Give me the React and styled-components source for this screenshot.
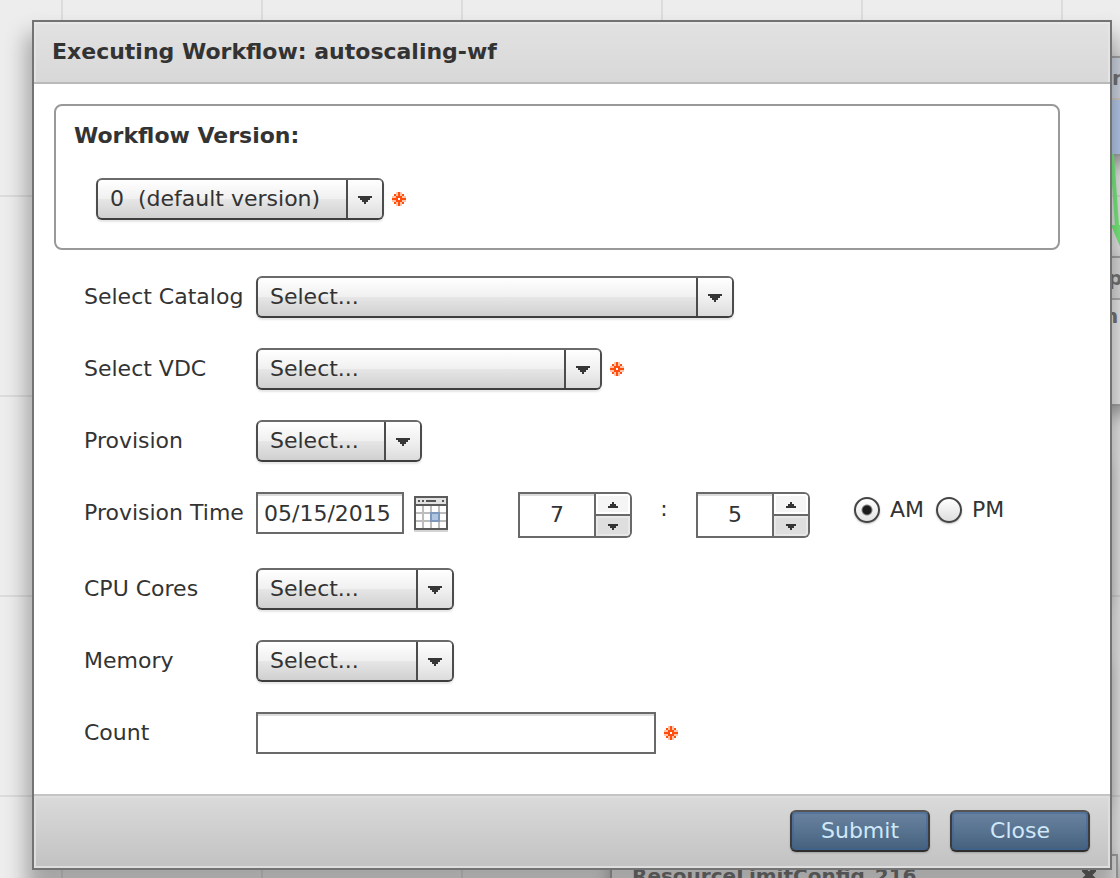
import { useState } from 'react';
import styled, { createGlobalStyle, css } from 'styled-components';

const GlobalStyle = createGlobalStyle`
  *, *::before, *::after {
    box-sizing: border-box;
  }

  body {
    margin: 0;
    background: #ededed;
    color: #333;
    font-family: 'DejaVu Sans', Verdana, sans-serif;
    font-size: 22px;
    line-height: 28px;
  }

  button, input, select {
    font: inherit;
    color: inherit;
  }
`;

const Page = styled.div`
  position: relative;
  min-height: 100vh;
  max-height: 100vh;
  padding: 20px 8px 8px 32px;
  overflow: hidden;
`;

// Workflow canvas behind the dialog
const Canvas = styled.div`
  position: absolute;
  inset: 0;
  overflow: hidden;
  background-color: #ededed;
  background-image:
    linear-gradient(90deg, #dcdcdc 2px, transparent 2px),
    linear-gradient(#dcdcdc 2px, transparent 2px);
  background-size: 200px 200px;
  background-position: 61px 195px;
`;

const Node = styled.div`
  position: absolute;
  left: ${p => p.$x}px;
  top: ${p => p.$y}px;
  width: ${p => p.$w}px;
  height: ${p => p.$h}px;
  border: 2px solid #a8a8a8;
  background: ${p => p.$fill};
  box-shadow: 0 8px 16px rgba(0, 0, 0, 0.3);
  color: #777;
  font-size: 20px;
  font-weight: bold;
  line-height: 24px;
`;

const NodeTitle = styled.div`
  display: flex;
  justify-content: space-between;
  height: 42px;
  padding: 8px 20px;
  border-bottom: 2px solid ${p => p.$line || '#b4b4b4'};
  background: ${p => p.$fill || 'transparent'};
  white-space: nowrap;
`;

const NodeText = styled.div`
  padding: 4px 16px;
`;

const Arrow = styled.svg`
  position: absolute;
  left: 1108px;
  top: 154px;
`;

const Dialog = styled.section`
  position: relative;
  border: 2px solid #737373;
  background: #fff;
  box-shadow: 0 20px 20px 6px rgba(0, 0, 0, 0.3);
`;

const DialogHeader = styled.header`
  padding: 16px 18px;
  border-bottom: 2px solid #bababa;
  background: linear-gradient(#e2e2e2, #d8d8d8);
  box-shadow: inset 0 2px 0 #e8e8e8, inset 2px 0 0 #e4e4e4, inset -2px 0 0 #e4e4e4;
`;

const Title = styled.h1`
  margin: 0;
  font-size: 22px;
  line-height: 28px;
`;

const Body = styled.div`
  padding: 20px 50px 40px 20px;
`;

const VersionBox = styled.fieldset`
  height: 146px;
  margin: 0 0 26px;
  padding: 16px 18px;
  border: 2px solid #999;
  border-radius: 8px;
`;

const VersionTitle = styled.label`
  display: block;
  margin-bottom: 28px;
  font-weight: bold;
`;

const VersionRow = styled.div`
  display: flex;
  align-items: center;
  padding-left: 22px;
`;

const Rows = styled.div`
  display: grid;
  gap: 30px;
  padding-left: 30px;
`;

const Row = styled.div`
  display: grid;
  grid-template-columns: 172px 1fr;
`;

const RowLabel = styled.label`
  line-height: 42px;
  white-space: nowrap;
`;

const Field = styled.div`
  display: flex;
  align-items: ${p => (p.$top ? 'flex-start' : 'center')};
`;

const SelectShell = styled.div`
  position: relative;
  width: ${p => p.$width}px;
  height: 42px;
  border: 2px solid;
  border-color: #6a6a6a #4c4c4c #3e3e3e;
  border-radius: 6px;
  background: linear-gradient(#fff, #f0f0f0 50%, #e6e6e6 51%, #d0d0d0);
  box-shadow: 0 2px 2px rgba(0, 0, 0, 0.1);
`;

const NativeSelect = styled.select`
  appearance: none;
  width: 100%;
  height: 38px;
  padding: 0 36px 0 12px;
  border: 0;
  background: transparent;
  white-space: pre;
`;

const SelectArrow = styled.span`
  position: absolute;
  top: 0;
  right: 0;
  display: grid;
  place-items: center;
  width: 36px;
  height: 38px;
  padding-top: 2px;
  border-left: 2px solid #4c4c4c;
  border-radius: 0 4px 4px 0;
  background: linear-gradient(#fff, #ededed 60%, #dcdcdc);
  pointer-events: none;
`;

const RequiredMark = styled.svg`
  flex-shrink: 0;
  margin-left: 8px;
`;

const inputBox = css`
  border: 2px solid #696969;
  border-radius: 0;
  background: #fff;
  box-shadow: inset 0 2px 0 #dcdcdc;
  outline: none;
`;

const TextInput = styled.input`
  ${inputBox}
  width: ${p => p.$width}px;
  height: 42px;
  padding: 0 6px;
`;

const CalendarButton = styled.button`
  display: flex;
  margin: 4px 70px 0 10px;
  padding: 0;
  border: 0;
  background: none;
`;

const Stepper = styled.div`
  display: flex;
  width: 114px;
  height: 46px;
`;

const StepperInput = styled.input`
  ${inputBox}
  width: 78px;
  padding: 0;
  text-align: center;
`;

const StepperButtons = styled.div`
  display: grid;
  grid-template-rows: 1fr 1fr;
  gap: 2px;
  width: 36px;
  border: 2px solid #696969;
  border-left: 0;
  border-radius: 0 6px 6px 0;
  background: #696969;
  overflow: hidden;
`;

const StepButton = styled.button`
  display: grid;
  place-items: center;
  padding: 2px 0 0;
  border: 0;
  background: ${p => (p.$down ? '#dedede' : '#f5f5f5')};
  box-shadow: inset 0 0 0 2px ${p => (p.$down ? '#e8e8e8' : '#fff')};
`;

const Colon = styled.span`
  width: 64px;
  line-height: 34px;
  text-align: center;
`;

const Meridiem = styled.div`
  display: flex;
  gap: 12px;
  margin-left: 44px;
`;

const RadioLabel = styled.label`
  display: flex;
  align-items: center;
  gap: 10px;
  height: 36px;
`;

const Radio = styled.input`
  appearance: none;
  width: 26px;
  height: 26px;
  margin: 0;
  border: 2px solid #444;
  border-radius: 50%;
  background: linear-gradient(#fff, #dedede);
  box-shadow: 0 1px 2px rgba(0, 0, 0, 0.25);

  &:checked {
    background: radial-gradient(circle, #1c1c1c 4px, transparent 6px), linear-gradient(#fff, #e4e4e4);
  }
`;

const DialogFooter = styled.footer`
  display: flex;
  justify-content: flex-end;
  gap: 20px;
  padding: 14px 20px 16px;
  border-top: 2px solid #c4c4c4;
  background: linear-gradient(#dadada, #c2c2c2);
  box-shadow: inset 0 0 0 2px #dedede;
`;

const ActionButton = styled.button`
  width: 140px;
  height: 42px;
  padding: 0;
  border: 2px solid;
  border-color: #555 #3c3c3c #2e2e2e;
  border-radius: 6px;
  background: linear-gradient(#6982a1, #58738f 50%, #45607c);
  box-shadow: inset 0 0 0 2px rgba(60, 100, 150, 0.45), 0 1px 2px rgba(0, 0, 0, 0.2);
  color: #cfe8fa;
`;

function Required() {
  return (
    <RequiredMark width="14" height="14" viewBox="0 0 14 14" shapeRendering="crispEdges" aria-hidden="true">
      <path d="M4 0h6v14H4zM0 4h14v6H0z" fill="#ffc4ac" />
      <path d="M6 0h2v14H6zM0 6h14v2H0z" fill="#ff4e0c" />
      <path d="M2 2h2v2H2zM10 2h2v2h-2zM2 10h2v2H2zM10 10h2v2h-2z" fill="#ff4e0c" />
      <path d="M4 4h6v6H4z" fill="#ff4e0c" />
      <path d="M6 6h2v2H6z" fill="#fff" />
    </RequiredMark>
  );
}

function Dropdown({ id, width, text }) {
  return (
    <SelectShell $width={width}>
      <NativeSelect id={id}>
        <option>{text}</option>
      </NativeSelect>
      <SelectArrow>
        <svg width="14" height="8" viewBox="0 0 14 8" shapeRendering="crispEdges">
          <path d="M0 0h14v2h-2v2h-2v2H8v2H6V6H4V4H2V2H0z" fill="#363636" />
        </svg>
      </SelectArrow>
    </SelectShell>
  );
}

function NumberStepper({ label, initial, max }) {
  const [value, setValue] = useState(initial);
  return (
    <Stepper>
      <StepperInput aria-label={label} value={value} onChange={e => setValue(Number(e.target.value) || 0)} />
      <StepperButtons>
        <StepButton aria-label={`Increase ${label}`} onClick={() => setValue(Math.min(max, value + 1))}>
          <svg width="10" height="6" viewBox="0 0 10 6" shapeRendering="crispEdges">
            <path d="M4 0h2v2h2v2h2v2H0V4h2V2h2z" fill="#333" />
          </svg>
        </StepButton>
        <StepButton $down aria-label={`Decrease ${label}`} onClick={() => setValue(Math.max(0, value - 1))}>
          <svg width="10" height="6" viewBox="0 0 10 6" shapeRendering="crispEdges">
            <path d="M0 0h10v2H8v2H6v2H4V4H2V2H0z" fill="#333" />
          </svg>
        </StepButton>
      </StepperButtons>
    </Stepper>
  );
}

function CalendarIcon() {
  return (
    <svg width="34" height="36" viewBox="0 0 34 36" shapeRendering="crispEdges">
      <path d="M0 34h34v2H0z" fill="#d4d4d4" />
      <path d="M0 0h34v34H0z" fill="#5b5b5b" />
      <path d="M2 2h30v6H2z" fill="#e2e2e2" />
      <path d="M2 10h30v22H2z" fill="#fff" />
      <path d="M4 4h2v2H4zM8 4h2v2H8zM12 4h10v2H12zM28 4h2v2h-2z" fill="#555" />
      <path d="M8 10h2v22H8zM16 10h2v22h-2zM24 10h2v22h-2zM2 16h30v2H2zM2 24h30v2H2z" fill="#bdbdbd" />
      <path d="M16 16h10v10H16z" fill="#7f99bd" />
      <path d="M18 18h6v6h-6z" fill="#b0c6e2" />
    </svg>
  );
}

export default function App() {
  const [meridiem, setMeridiem] = useState('AM');

  return (
    <Page>
      <GlobalStyle />
      <Canvas aria-hidden="true">
        <Node $x={1090} $y={56} $w={200} $h={100} $fill="#bcd0f2">
          <NodeTitle $fill="#d4dcea" $line="#d8d0c8">rt</NodeTitle>
        </Node>
        <Node $x={1086} $y={256} $w={200} $h={150} $fill="#f0f0f0">
          <NodeTitle $fill="#e2e2e2">p</NodeTitle>
          <NodeText>n</NodeText>
        </Node>
        <Node $x={800} $y={456} $w={306} $h={140} $fill="#ececec" />
        <Node $x={800} $y={656} $w={306} $h={140} $fill="#ececec" />
        <Node $x={610} $y={854} $w={508} $h={100} $fill="#ececec">
          <NodeTitle>
            <span>ResourceLimitConfig_216</span>
            <svg width="14" height="14" viewBox="0 0 14 14">
              <path d="M1 5l12 12M13 5L1 17" stroke="#666" strokeWidth="5" />
            </svg>
          </NodeTitle>
        </Node>
        <Arrow width="20" height="100" viewBox="0 0 20 100">
          <path d="M4 0l5 72" stroke="#7cf582" strokeWidth="4" />
          <path d="M3 71h18v24h-8z" fill="#7cf582" />
        </Arrow>
      </Canvas>

      <Dialog role="dialog" aria-labelledby="dialog-title">
        <DialogHeader>
          <Title id="dialog-title">Executing Workflow: autoscaling-wf</Title>
        </DialogHeader>

        <Body>
          <VersionBox>
            <VersionTitle htmlFor="version">Workflow Version:</VersionTitle>
            <VersionRow>
              <Dropdown id="version" width={288} text={'0\u00a0 (default version)'} />
              <Required />
            </VersionRow>
          </VersionBox>

          <Rows>
            <Row>
              <RowLabel htmlFor="catalog">Select Catalog</RowLabel>
              <Field>
                <Dropdown id="catalog" width={478} text="Select..." />
              </Field>
            </Row>
            <Row>
              <RowLabel htmlFor="vdc">Select VDC</RowLabel>
              <Field>
                <Dropdown id="vdc" width={346} text="Select..." />
                <Required />
              </Field>
            </Row>
            <Row>
              <RowLabel htmlFor="provision">Provision</RowLabel>
              <Field>
                <Dropdown id="provision" width={166} text="Select..." />
              </Field>
            </Row>
            <Row>
              <RowLabel htmlFor="provision-time">Provision Time</RowLabel>
              <Field $top>
                <TextInput id="provision-time" $width={148} defaultValue="05/15/2015" />
                <CalendarButton aria-label="Pick a date">
                  <CalendarIcon />
                </CalendarButton>
                <NumberStepper label="hour" initial={7} max={12} />
                <Colon>:</Colon>
                <NumberStepper label="minute" initial={5} max={59} />
                <Meridiem>
                  {['AM', 'PM'].map(m => (
                    <RadioLabel key={m}>
                      <Radio type="radio" name="meridiem" checked={meridiem === m} onChange={() => setMeridiem(m)} />
                      {m}
                    </RadioLabel>
                  ))}
                </Meridiem>
              </Field>
            </Row>
            <Row>
              <RowLabel htmlFor="cpu">CPU Cores</RowLabel>
              <Field>
                <Dropdown id="cpu" width={198} text="Select..." />
              </Field>
            </Row>
            <Row>
              <RowLabel htmlFor="memory">Memory</RowLabel>
              <Field>
                <Dropdown id="memory" width={198} text="Select..." />
              </Field>
            </Row>
            <Row>
              <RowLabel htmlFor="count">Count</RowLabel>
              <Field>
                <TextInput id="count" $width={400} />
                <Required />
              </Field>
            </Row>
          </Rows>
        </Body>

        <DialogFooter>
          <ActionButton>Submit</ActionButton>
          <ActionButton>Close</ActionButton>
        </DialogFooter>
      </Dialog>
    </Page>
  );
}
